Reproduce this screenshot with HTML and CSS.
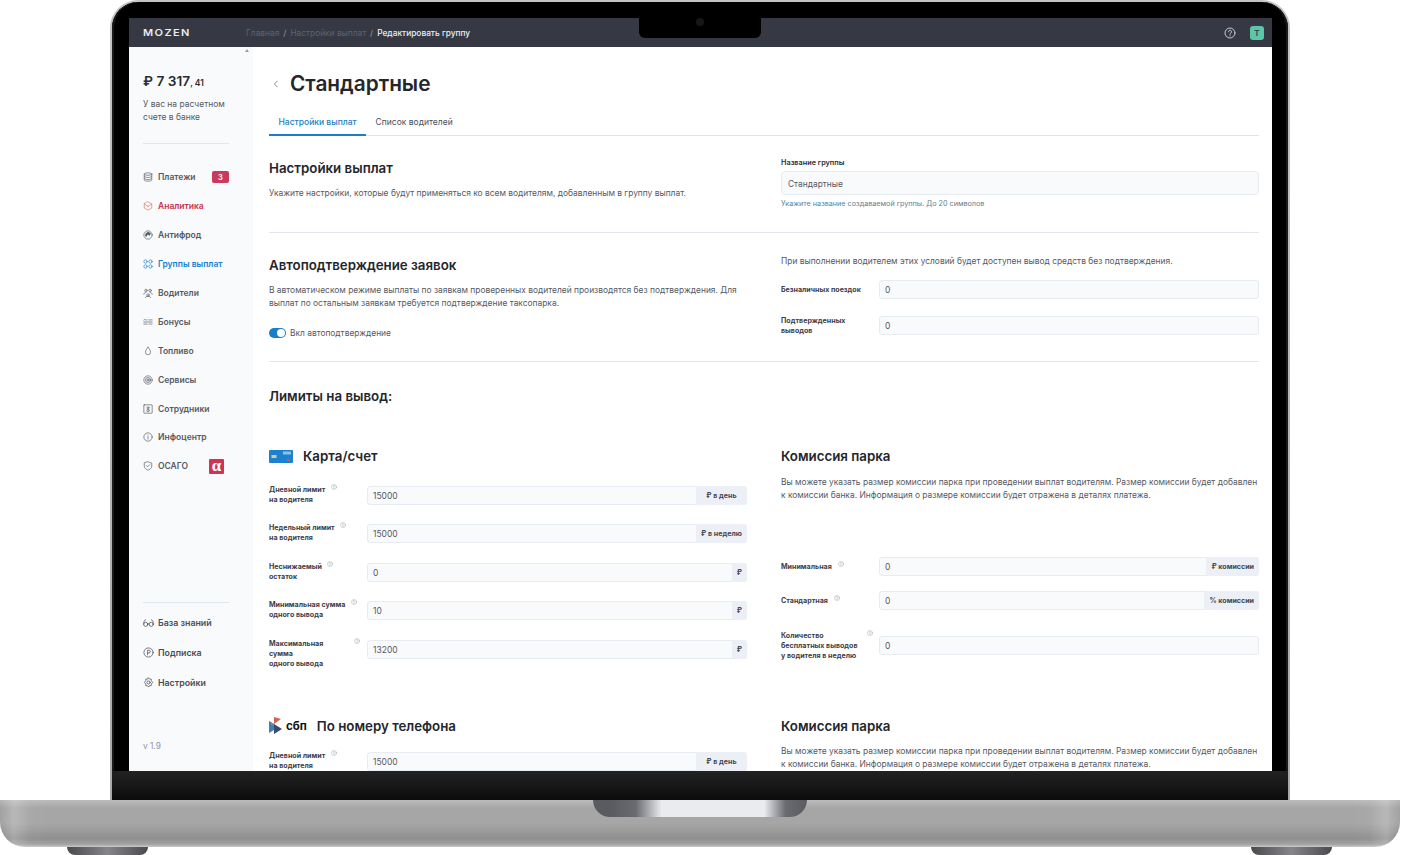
FILE: index.html
```html
<!DOCTYPE html>
<html lang="ru">
<head>
<meta charset="utf-8">
<title>Mozen</title>
<link rel="stylesheet" href="styles.css">
</head>
<body>
<svg class="defs" width="0" height="0">
  <symbol id="q" viewBox="0 0 24 24"><circle cx="12" cy="12" r="10"/><path d="M9 9.5a3 3 0 1 1 4.6 2.5c-1 .7-1.6 1.3-1.6 2.5M12 17.5v.5"/></symbol>
</svg>
<div class="laptop">
  <div class="lid">
    <div class="bezel">
      <div class="screen">
        <header class="topbar">
          <div class="logo">MOZEN</div>
          <div class="crumbs"><span class="dim">Главная</span><i>/</i><span class="dim">Настройки выплат</span><i>/</i><span>Редактировать группу</span></div>
          <div class="top-right">
            <svg class="ic-help" viewBox="0 0 24 24"><use href="#q"/></svg>
            <div class="avatar">T</div>
          </div>
          <div class="notch"><span class="cam"></span></div>
        </header>
        <div class="app">
          <aside class="side">
            <span class="scroll-up"></span>
            <div class="balance">₽ 7 317<small>, 41</small></div>
            <p class="balance-note">У вас на расчетном<br>счете в банке</p>
            <hr class="side-line">
            <nav class="nav">
              <a class="item"><svg viewBox="0 0 24 24"><ellipse cx="12" cy="5" rx="9" ry="3"/><path d="M3 5v14c0 1.700 4 3 9 3s9-1.300 9-3V5M3 10c0 1.700 4 3 9 3s9-1.300 9-3M3 15c0 1.700 4 3 9 3s9-1.300 9-3"/></svg>Платежи<b class="badge">3</b></a>
              <a class="item red"><svg viewBox="0 0 24 24"><path d="M12 2l9 5v10l-9 5-9-5V7zM3 7l9 6 9-6M12 13v1"/></svg>Аналитика</a>
              <a class="item"><svg viewBox="0 0 24 24"><circle cx="12" cy="12" r="10"/><path class="solid" d="M6 9l6-5 7 4-3 6-5-3-3 6-3-3z"/></svg>Антифрод</a>
              <a class="item blue"><svg viewBox="0 0 24 24"><circle cx="6" cy="6" r="4"/><circle cx="18" cy="6" r="4"/><circle cx="6" cy="18" r="4"/><circle cx="18" cy="18" r="4"/></svg>Группы выплат</a>
              <a class="item"><svg viewBox="0 0 24 24"><circle cx="7" cy="6" r="3"/><circle cx="17" cy="6" r="3"/><circle cx="12" cy="17" r="3"/><path d="M2 15c0-3 2-4 5-4M22 15c0-3-2-4-5-4M6 23c0-2 2-3 6-3s6 1 6 3"/></svg>Водители</a>
              <a class="item"><svg viewBox="0 0 24 24"><path d="M2 7c3-3 5 2 8 0M14 7h8M2 17h8M14 17c3-3 5 2 8 0M2 12h20"/></svg>Бонусы</a>
              <a class="item"><svg viewBox="0 0 24 24"><path d="M12 3c4 5 6 8 6 12a6 6 0 0 1-12 0c0-4 2-7 6-12z"/></svg>Топливо</a>
              <a class="item"><svg viewBox="0 0 24 24"><circle cx="12" cy="12" r="10"/><circle cx="12" cy="12" r="6"/><circle cx="12" cy="12" r="2.500"/></svg>Сервисы</a>
              <a class="item"><svg viewBox="0 0 24 24"><rect x="2" y="2" width="20" height="20" rx="1"/><circle cx="12" cy="9" r="2.500"/><circle cx="12" cy="15.500" r="3"/></svg>Сотрудники</a>
              <a class="item"><svg viewBox="0 0 24 24"><circle cx="12" cy="12" r="10"/><path d="M12 7v1M12 11v6"/></svg>Инфоцентр</a>
              <a class="item"><svg viewBox="0 0 24 24"><path d="M12 2l9 3v7c0 5-4 8-9 10-5-2-9-5-9-10V5zM8 11l3 3 5-5"/></svg>ОСАГО<b class="alfa">α</b></a>
            </nav>
            <div class="side-bottom">
              <hr class="side-line">
              <a class="item big"><svg viewBox="0 0 24 24"><circle cx="6" cy="16" r="4.500"/><circle cx="18" cy="16" r="4.500"/><path d="M1.500 16c0-6 1-9 4-10M22.500 16c0-6-1-9-4-10M10.500 15c1-.6 2-.6 3 0"/></svg>База знаний</a>
              <a class="item big"><svg viewBox="0 0 24 24"><circle cx="12" cy="12" r="10"/><path d="M10 17V7h3a3 3 0 0 1 0 6h-3"/></svg>Подписка</a>
              <a class="item big"><svg viewBox="0 0 24 24"><path d="M12 2l2.500 2.500h3.500v3.500L21 12l-3 3.500V19h-3.500L12 22l-2.500-3H6v-3.500L3 12l3-4V4.500h3.500z"/><circle cx="12" cy="12" r="3.500"/></svg>Настройки</a>
              <div class="version">v 1.9</div>
            </div>
          </aside>
          <main class="main">
            <div class="title-row">
              <svg class="back" viewBox="0 0 24 24"><path d="M15 5l-7 7 7 7"/></svg>
              <h1>Стандартные</h1>
            </div>
            <div class="tabs"><span class="tab active">Настройки выплат</span><span class="tab">Список водителей</span></div>

            <section class="grid sec-a">
              <div class="col pad3">
                <h2>Настройки выплат</h2>
                <p class="desc">Укажите настройки, которые будут применяться ко всем водителям, добавленным в группу выплат.</p>
              </div>
              <div class="col">
                <div class="field-label">Название группы</div>
                <div class="field-big">Стандартные</div>
                <div class="hint">Укажите название создаваемой группы. До 20 символов</div>
              </div>
            </section>

            <section class="grid sec-b">
              <div class="col pad2">
                <h2>Автоподтверждение заявок</h2>
                <p class="desc">В автоматическом режиме выплаты по заявкам проверенных водителей производятся без подтверждения. Для выплат по остальным заявкам требуется подтверждение таксопарка.</p>
                <div class="toggle-row"><span class="toggle"></span>Вкл автоподтверждение</div>
              </div>
              <div class="col">
                <p class="desc flush">При выполнении водителем этих условий будет доступен вывод средств без подтверждения.</p>
                <div class="rows rows-b">
                  <div class="row"><div class="lbl">Безналичных поездок</div><div class="inp">0</div></div>
                  <div class="row"><div class="lbl">Подтвержденных выводов</div><div class="inp">0</div></div>
                </div>
              </div>
            </section>

            <section class="sec-c">
              <h2>Лимиты на вывод:</h2>
              <div class="grid group">
                <div class="col">
                  <h3><svg class="card" viewBox="0 0 24 13"><rect width="24" height="13" rx="1" fill="#1c82d0"/><rect x="2.500" y="5" width="5" height="3" fill="#e0c79a"/><rect x="14" y="1.500" width="8" height="3" fill="#8fc0e6"/><rect x="18" y="9" width="3" height="2" fill="#d9505c"/></svg>Карта/счет</h3>
                  <div class="rows rows-l">
                    <div class="row"><div class="lbl">Дневной лимит <svg class="tip" viewBox="0 0 24 24"><use href="#q"/></svg><br>на водителя</div><div class="inp">15000<span class="add wide">₽ в день</span></div></div>
                    <div class="row"><div class="lbl">Недельный лимит <svg class="tip" viewBox="0 0 24 24"><use href="#q"/></svg><br>на водителя</div><div class="inp">15000<span class="add wide">₽ в неделю</span></div></div>
                    <div class="row"><div class="lbl">Неснижаемый <svg class="tip tip-wide" viewBox="0 0 24 24"><use href="#q"/></svg><br>остаток</div><div class="inp">0<span class="add">₽</span></div></div>
                    <div class="row"><div class="lbl">Минимальная сумма <svg class="tip" viewBox="0 0 24 24"><use href="#q"/></svg><br>одного вывода</div><div class="inp">10<span class="add">₽</span></div></div>
                    <div class="row"><div class="lbl">Максимальная <svg class="tip tip-far" viewBox="0 0 24 24"><use href="#q"/></svg><br>сумма<br>одного вывода</div><div class="inp">13200<span class="add">₽</span></div></div>
                  </div>
                </div>
                <div class="col">
                  <h3 class="plain">Комиссия парка</h3>
                  <p class="desc">Вы можете указать размер комиссии парка при проведении выплат водителям. Размер комиссии будет добавлен к комиссии банка. Информация о размере комиссии будет отражена в деталях платежа.</p>
                  <div class="rows rows-r">
                    <div class="row"><div class="lbl mid">Минимальная <svg class="tip" viewBox="0 0 24 24"><use href="#q"/></svg></div><div class="inp">0<span class="add">₽ комиссии</span></div></div>
                    <div class="row"><div class="lbl mid">Стандартная <svg class="tip" viewBox="0 0 24 24"><use href="#q"/></svg></div><div class="inp">0<span class="add">% комиссии</span></div></div>
                    <div class="row"><div class="lbl high">Количество <svg class="tip tip-end" viewBox="0 0 24 24"><use href="#q"/></svg><br>бесплатных выводов<br>у водителя в неделю</div><div class="inp">0</div></div>
                  </div>
                </div>
              </div>
              <div class="grid group next">
                <div class="col">
                  <h3><span class="sbp"><svg viewBox="0 0 14 17"><path d="M0 4l5 3v6l-5 3z" fill="#3f7fb5"/><path d="M5 7l8 5-8 5z" fill="#3a4a6b"/><path d="M5 0l7 2-7 5z" fill="#d9604c"/><path d="M0 4l5 3-2 2z" fill="#7c8a99"/></svg><b>сбп</b></span>По номеру телефона</h3>
                  <div class="rows rows-l near">
                    <div class="row"><div class="lbl">Дневной лимит <svg class="tip" viewBox="0 0 24 24"><use href="#q"/></svg><br>на водителя</div><div class="inp">15000<span class="add wide">₽ в день</span></div></div>
                  </div>
                </div>
                <div class="col">
                  <h3 class="plain">Комиссия парка</h3>
                  <p class="desc">Вы можете указать размер комиссии парка при проведении выплат водителям. Размер комиссии будет добавлен к комиссии банка. Информация о размере комиссии будет отражена в деталях платежа.</p>
                </div>
              </div>
            </section>
          </main>
        </div>
      </div>
      <div class="chin"></div>
    </div>
  </div>
  <div class="base"><div class="thumb"></div></div>
  <div class="feet"><span class="foot"></span><span class="foot"></span></div>
</div>
</body>
</html>
```
FILE: styles.css
```css
* { box-sizing: border-box; }
html, body { margin: 0; height: 855px; overflow: hidden; background: #fff; }
body { font-family: Inter, "Noto Sans", sans-serif; color: #23252b; }
.defs { position: absolute; }
svg { fill: none; stroke: currentColor; stroke-width: 1.800; stroke-linecap: round; stroke-linejoin: round; }
p, h1, h2, h3, hr { margin: 0; }

.laptop { width: 1402px; }
.lid { width: 1180px; height: 800px; margin-left: 110px; padding: 2px 2px 0; border-radius: 28px 28px 0 0; background: linear-gradient(#c4c4c4, #a9a9a9); }
.bezel { height: 798px; padding-top: 16px; background: #000; border-radius: 26px 26px 0 0; box-shadow: inset -2px 0 0 #1a1a1a, inset 2px 0 0 #1a1a1a; display: flex; flex-direction: column; }
.screen { width: 1143px; height: 753px; margin-left: 17px; background: #fff; overflow: hidden; flex: none; }
.chin { flex: 1; background: linear-gradient(#222, #191919 45%, #0b0b0b); }

.topbar { position: relative; height: 29px; background: #363944; display: flex; align-items: center; padding: 0 8px 0 14px; color: #fff; }
.logo { width: 103px; font-size: 9.500px; font-weight: 600; letter-spacing: 1.200px; color: #e9eaed; transform: scaleX(1.160); transform-origin: left center; }
.crumbs { font-size: 8.350px; font-weight: 500; display: flex; color: #eceef2; }
.crumbs .dim { color: #5d6270; font-weight: 400; }
.crumbs i { font-style: normal; color: #858a96; margin: 0 4px; }
.top-right { margin-left: auto; display: flex; align-items: center; gap: 14px; }
.ic-help { width: 12px; height: 12px; color: #dfe0e3; stroke-width: 1.700; }
.avatar { width: 14px; height: 14px; background: #5cc6a8; border-radius: 3px; font-size: 8px; font-weight: 700; color: #3a4a50; display: flex; align-items: center; justify-content: center; }
.notch { position: absolute; left: 510px; top: 0; width: 122px; height: 20px; background: #000; border-radius: 0 0 6px 6px; display: flex; justify-content: center; }
.cam { width: 8px; height: 8px; border-radius: 50%; background: #17171a; }

.app { display: flex; height: 724px; }
.side { position: relative; width: 124px; flex: none; background: #f9fafc; padding: 26px 24px 0 14px; display: flex; flex-direction: column; }
.scroll-up { position: absolute; left: 116px; top: 2px; border: 2px solid transparent; border-top: 0; border-bottom: 3px solid #9a9da6; }
.balance { font-size: 13.700px; font-weight: 600; line-height: 16px; color: #2a2c33; }
.balance small { font-size: 8.500px; }
.balance-note { margin-top: 7px; font-size: 8.450px; line-height: 13px; color: #555963; }
.side-line { border: 0; border-top: 1px solid #e1e7f0; width: 86px; }
.balance-note + .side-line { margin-top: 19px; }
.nav { margin-top: 19px; display: flex; flex-direction: column; }
.item { height: 28.900px; display: flex; align-items: center; font-size: 8.500px; font-weight: 600; color: #555963; white-space: nowrap; }
.item svg { width: 10px; height: 10px; margin-right: 5px; flex: none; stroke-width: 1.600; }
.item .solid { fill: currentColor; stroke: none; }
.red { color: #c8304c; }
.red svg { color: #d9785c; }
.blue { color: #1a7fd0; }
.badge { margin-left: auto; width: 17px; height: 12px; background: #cb3a5c; color: #fff; border-radius: 2px; font-size: 7.500px; font-weight: 600; display: flex; align-items: center; justify-content: center; }
.alfa { margin-left: 21px; width: 15px; height: 15px; background: #cf3550; color: #fff; font-family: "Liberation Serif", serif; font-size: 17px; font-weight: 700; line-height: 13px; text-align: center; border-radius: 1px; }
.side-bottom { margin-top: auto; padding-bottom: 20px; }
.side-bottom .side-line { margin-bottom: 5px; }
.big { height: 29.700px; font-size: 8.800px; color: #4a4d57; }
.big svg { width: 11px; height: 11px; margin-right: 4px; }
.version { margin-top: 44px; font-size: 8.300px; line-height: 10px; color: #8e929b; }

.main { flex: 1; padding: 25px 13px 0 16px; overflow: hidden; }
.title-row { height: 24px; display: flex; align-items: center; }
.back { width: 10px; height: 10px; margin-left: 2px; color: #777b85; stroke-width: 2; }
h1 { margin-left: 9px; font-size: 20.800px; font-weight: 600; line-height: 24px; color: #24262c; }
.tabs { margin-top: 12px; height: 28px; display: flex; border-bottom: 1px solid #dfe4ec; }
.tab { height: 28px; padding: 0 9.500px; font-size: 8.500px; font-weight: 400; line-height: 29px; color: #4b4e58; white-space: nowrap; }
.tab.active { font-weight: 500; color: #1a7fc6; border-bottom: 2px solid #1a7fc6; }

.grid { display: grid; grid-template-columns: 478px 478px; column-gap: 34px; }
h2 { font-size: 13.300px; font-weight: 600; line-height: 16px; color: #24262c; }
h3 { height: 18px; font-size: 13.300px; font-weight: 600; line-height: 18px; color: #24262c; display: flex; align-items: center; }
.desc { margin-top: 10.500px; font-size: 8.420px; line-height: 13px; color: #555963; }
.desc.flush { margin-top: 0; }
.sec-a { height: 97px; padding-top: 21px; border-bottom: 1px solid #e3e6ec; }
.pad3 { padding-top: 3px; }
.pad2 { padding-top: 2.500px; }
.field-label { margin-top: 1px; font-size: 7.300px; font-weight: 600; line-height: 10px; color: #2c2e35; }
.field-big { margin-top: 3px; height: 24px; padding-left: 6px; font-size: 8.400px; line-height: 24px; color: #555963; background: #f9fafc; border: 1px solid #e7ebf2; border-radius: 4px; }
.hint { margin-top: 3px; font-size: 7.220px; line-height: 12px; color: #5d7f94; }
.sec-b { height: 129px; padding-top: 21.500px; border-bottom: 1px solid #e3e6ec; }
.toggle-row { margin-top: 18.500px; height: 10px; display: flex; align-items: center; gap: 4px; font-size: 8.400px; color: #555963; }
.toggle { position: relative; width: 17px; height: 10px; border-radius: 5px; background: #1a7fc6; }
.toggle::after { content: ""; position: absolute; right: 1px; top: 1px; width: 8px; height: 8px; border-radius: 50%; background: #fff; }

.rows { display: flex; flex-direction: column; }
.rows-b { margin-top: 12.500px; gap: 17px; }
.rows-l { margin-top: 20.900px; gap: 19.500px; }
.rows-l.near { margin-top: 17px; }
.rows-r { margin-top: 55.500px; }
.rows-r .row:nth-child(2) { margin-top: 15px; }
.rows-r .row:nth-child(3) { margin-top: 26px; }
.row { height: 19px; display: flex; }
.lbl { width: 98px; flex: none; margin-top: -2px; padding-right: 12px; font-size: 7.100px; font-weight: 700; line-height: 10px; color: #3e4049; white-space: normal; }
.rows-l .lbl, .rows-r .lbl { white-space: nowrap; padding-right: 0; }
.rows-b .lbl { margin-top: 0; }
.rows-b .row:first-child .lbl { white-space: nowrap; margin-top: 5px; }
.lbl.mid { margin-top: 4px; }
.lbl.high { margin-top: -6px; }
.tip { width: 6px; height: 6px; margin-left: 4px; vertical-align: 2px; color: #9a9ea8; }
.tip-wide { margin-left: 3px; }
.tip-far { margin-left: 29px; }
.tip-end { margin-left: 42px; }
.inp { flex: 1; position: relative; height: 19px; padding-left: 5px; font-size: 8.500px; line-height: 18px; color: #555963; background: #f9fafc; border: 1px solid #e7ebf2; border-radius: 3px; }
.add { position: absolute; right: -1px; top: -1px; height: 19px; padding: 0 5px; background: #edeff6; border-radius: 0 3px 3px 0; font-size: 7.100px; font-weight: 700; line-height: 19px; color: #45474f; text-align: center; }
.add.wide { width: 51px; padding: 0; }

.sec-c { padding-top: 26px; }
.group { margin-top: 43px; }
.group.next { margin-top: 58px; }
.card { width: 24px; height: 13px; margin-right: 10px; stroke: none; }
.sbp { display: flex; align-items: center; margin-right: 10px; }
.sbp svg { width: 14px; height: 17px; stroke: none; margin-right: 3px; }
.sbp b { font-size: 11.500px; font-weight: 700; color: #111; }

.base { position: relative; height: 47px; width: 1400px; border-radius: 0 0 25px 25px;
  background:
    linear-gradient(90deg, rgba(90,90,90,.06) 0, rgba(255,255,255,.2) 14px, rgba(255,255,255,.03) 30px, rgba(255,255,255,0) 50px, rgba(255,255,255,0) 1350px, rgba(255,255,255,.03) 1370px, rgba(255,255,255,.2) 1386px, rgba(90,90,90,.06) 1400px),
    linear-gradient(#bcbcbc, #a6a6a6 8px, #a6a6a6 50%, #8f8f8f 82%, #a2a2a2 94%, #cacaca); }
.thumb { position: absolute; left: 593px; top: 0; width: 214px; height: 17px; border-radius: 0 0 17px 17px; background: linear-gradient(90deg, #5a5b61 0, #5a5b61 8%, #6a6b70 20%, #eaebef 32%, #eaebef 80%, #6a6b70 90%, #5a5b61 100%); }
.feet { display: flex; justify-content: space-between; width: 1265px; margin-left: 67px; }
.foot { width: 81px; height: 8px; border-radius: 0 0 8px 8px; background: linear-gradient(90deg, #4a4a4e, #85858a 50%, #4a4a4e); }
```
